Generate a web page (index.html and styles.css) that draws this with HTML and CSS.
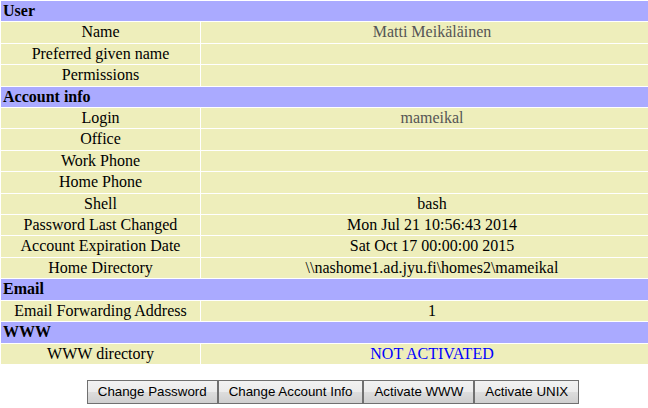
FILE: index.html
```html
<!DOCTYPE html>
<html>
<head>
<meta charset="utf-8">
<link rel="stylesheet" href="styles.css">
</head>
<body>
<div class="page">
<table class="info">
<colgroup><col class="c1"><col class="c2"></colgroup>
<tr><th colspan="2" class="sec">User</th></tr>
<tr><td>Name</td><td class="dim">Matti Meikäläinen</td></tr>
<tr><td>Preferred given name</td><td></td></tr>
<tr><td>Permissions</td><td></td></tr>
<tr><th colspan="2" class="sec">Account info</th></tr>
<tr><td>Login</td><td class="dim">mameikal</td></tr>
<tr><td>Office</td><td></td></tr>
<tr><td>Work Phone</td><td></td></tr>
<tr><td>Home Phone</td><td></td></tr>
<tr><td>Shell</td><td>bash</td></tr>
<tr><td>Password Last Changed</td><td>Mon Jul 21 10:56:43 2014</td></tr>
<tr><td>Account Expiration Date</td><td>Sat Oct 17 00:00:00 2015</td></tr>
<tr><td>Home Directory</td><td>\\nashome1.ad.jyu.fi\homes2\mameikal</td></tr>
<tr><th colspan="2" class="sec">Email</th></tr>
<tr><td>Email Forwarding Address</td><td>1</td></tr>
<tr><th colspan="2" class="sec">WWW</th></tr>
<tr><td>WWW directory</td><td class="na">NOT ACTIVATED</td></tr>
</table>
<div class="actions">
<button class="btn">Change Password</button><button class="btn">Change Account Info</button><button class="btn">Activate WWW</button><button class="btn">Activate UNIX</button>
</div>
</div>
</body>
</html>
```
FILE: styles.css
```css
html, body {
  margin: 0;
  padding: 0;
  background: #ffffff;
  overflow: hidden;
}
.page {
  width: 666px;
  font-family: "Times New Roman", "Liberation Serif", "DejaVu Serif", serif;
  font-size: 16px;
  color: #000;
}
.info {
  width: 664px;
  table-layout: fixed;
  border-collapse: separate;
  border-spacing: 1px;
  font-family: "Times New Roman", "Liberation Serif", "DejaVu Serif", serif;
}
.c1 { width: 199px; }
.c2 { width: 462px; }
.info td, .info th {
  font-family: "Times New Roman", "Liberation Serif", "DejaVu Serif", serif;
  font-size: 16px;
  padding: 1px;
  height: 18.4px;
  line-height: 18.4px;
  vertical-align: middle;
}
.info td {
  background: #eeeebb;
  text-align: center;
  white-space: nowrap;
}
.info th.sec {
  background: #aaaaff;
  text-align: left;
  font-weight: bold;
  padding-left: 2px;
}
.dim { color: #555555; }
.na { color: #0000ff; }
.actions {
  display: flex;
  justify-content: center;
  margin-top: 15px;
}
.btn {
  font-family: "Liberation Sans", Arial, sans-serif;
  font-size: 13.33px;
  color: #000;
  height: 24px;
  padding: 0 10px;
  margin: 0;
  border: 1px solid #707070;
  border-radius: 0;
  background: linear-gradient(#f2f2f2 0%, #ebebeb 50%, #dddddd 51%, #cfcfcf 100%);
}
```
